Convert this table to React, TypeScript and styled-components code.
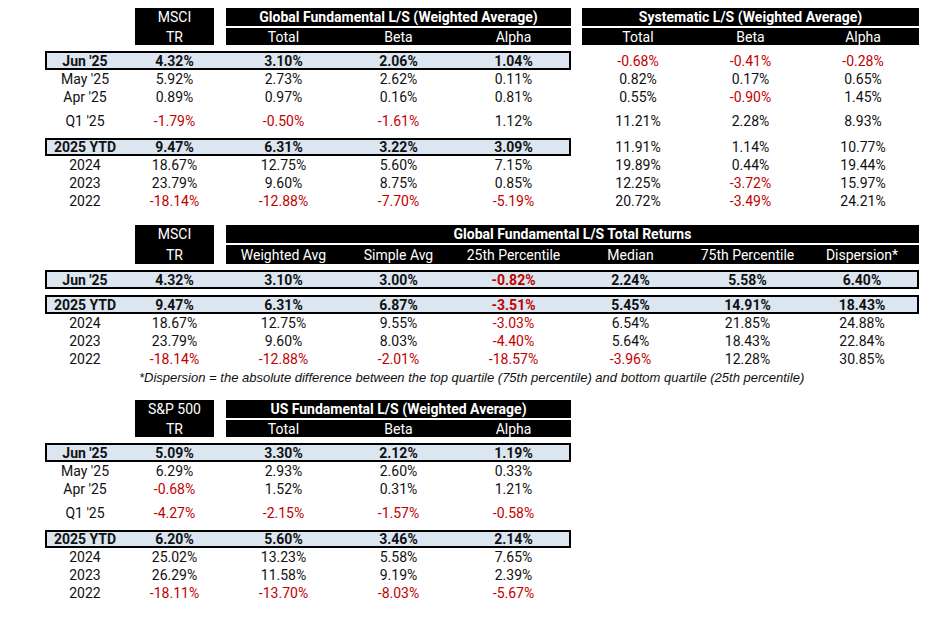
import React from 'react';
import styled, { createGlobalStyle } from 'styled-components';

const GlobalStyle = createGlobalStyle`
  html, body {
    margin: 0;
    padding: 0;
    background: #ffffff;
  }
  body {
    font-family: Roboto, "Liberation Sans", Arial, sans-serif;
    font-size: 14px;
    color: #111111;
  }
`;

const Page = styled.div`
  width: 948px;
  height: 620px;
  box-sizing: border-box;
  padding: 8px 0 0 45px;
  display: flex;
  flex-direction: column;
  overflow: hidden;
`;

const Table = styled.section<{ $mt?: number }>`
  display: flex;
  flex-direction: column;
  margin-top: ${p => p.$mt ?? 0}px;
`;

const HeaderRow = styled.div`
  display: flex;
  align-items: stretch;
`;

const LabelSpacer = styled.div`
  width: 80px;
  flex: none;
`;

const IndexHead = styled.div`
  width: 79px;
  margin-left: 10px;
  flex: none;
  background: #000;
  color: #fff;
  display: flex;
  flex-direction: column;
  gap: 2px;
`;

const HeadLine = styled.div<{ $h: number }>`
  height: ${p => p.$h}px;
  display: flex;
  align-items: center;
  justify-content: center;
`;

const GroupHead = styled.div<{ $w: number; $ml: number }>`
  width: ${p => p.$w}px;
  margin-left: ${p => p.$ml}px;
  flex: none;
  display: flex;
  flex-direction: column;
  gap: 2px;
`;

const TitleBar = styled.div<{ $h: number }>`
  height: ${p => p.$h}px;
  background: #000;
  color: #fff;
  font-weight: 700;
  display: flex;
  align-items: center;
  justify-content: center;
  white-space: nowrap;
`;

const SubBar = styled.div<{ $h: number }>`
  height: ${p => p.$h}px;
  background: #000;
  color: #fff;
  display: flex;
`;

const SubCell = styled.div<{ $w: number }>`
  width: ${p => p.$w}px;
  flex: none;
  display: flex;
  align-items: center;
  justify-content: center;
  white-space: nowrap;
`;

const Row = styled.div<{ $h: number; $mt: number }>`
  display: flex;
  height: ${p => p.$h}px;
  margin-top: ${p => p.$mt}px;
`;

const Boxed = styled.div<{ $hl?: boolean }>`
  display: flex;
  align-items: stretch;
  background: ${p => (p.$hl ? '#dce6f1' : 'transparent')};
  box-shadow: ${p => (p.$hl ? 'inset 0 0 0 2px #000' : 'none')};
`;

const Label = styled.div<{ $bold?: boolean }>`
  width: 80px;
  flex: none;
  display: flex;
  align-items: center;
  justify-content: center;
  font-weight: ${p => (p.$bold ? 700 : 400)};
  white-space: nowrap;
`;

const Value = styled.div<{ $w: number; $ml: number; $bold?: boolean; $neg?: boolean }>`
  width: ${p => p.$w}px;
  margin-left: ${p => p.$ml}px;
  flex: none;
  display: flex;
  align-items: center;
  justify-content: center;
  font-weight: ${p => (p.$bold ? 700 : 400)};
  color: ${p => (p.$neg ? '#c00000' : '#111111')};
`;

const Footnote = styled.div`
  height: 18px;
  display: flex;
  align-items: center;
  padding-left: 94px;
  font-family: "Liberation Sans", Arial, sans-serif;
  font-style: italic;
  font-size: 13px;
  color: #111;
  white-space: nowrap;
`;

type Col = { w: number; ml?: number; head: string };
type Group = { title: string; from: number; to: number };
type RowData = { label: string; values: string[]; hl?: boolean; h?: number; mt?: number };

type TableProps = {
  index: [string, string];
  cols: Col[];
  groups: Group[];
  rows: RowData[];
  boxCount: number;
  topH: number;
  bottomH: number;
  mt?: number;
  children?: React.ReactNode;
};

const DataTable = ({ index, cols, groups, rows, boxCount, topH, bottomH, mt, children }: TableProps) => {
  const cell = (v: string, i: number, bold?: boolean) => (
    <Value key={i} $w={cols[i].w} $ml={cols[i].ml ?? 0} $bold={bold} $neg={v.startsWith('-')}>
      {v}
    </Value>
  );

  return (
    <Table $mt={mt}>
      <HeaderRow>
        <LabelSpacer />
        <IndexHead>
          <HeadLine $h={topH}>{index[0]}</HeadLine>
          <HeadLine $h={bottomH}>{index[1]}</HeadLine>
        </IndexHead>
        {groups.map(g => {
          const part = cols.slice(g.from, g.to);
          const width = part.reduce((s, c) => s + c.w, 0);
          return (
            <GroupHead key={g.title} $w={width} $ml={cols[g.from].ml ?? 0}>
              <TitleBar $h={topH}>{g.title}</TitleBar>
              <SubBar $h={bottomH}>
                {part.map(c => (
                  <SubCell key={c.head} $w={c.w}>{c.head}</SubCell>
                ))}
              </SubBar>
            </GroupHead>
          );
        })}
      </HeaderRow>

      {rows.map(r => (
        <Row key={r.label} $h={r.h ?? 18} $mt={r.mt ?? 0}>
          <Boxed $hl={r.hl}>
            <Label $bold={r.hl}>{r.label}</Label>
            {r.values.slice(0, boxCount).map((v, i) => cell(v, i, r.hl))}
          </Boxed>
          {r.values.slice(boxCount).map((v, i) => cell(v, i + boxCount))}
        </Row>
      ))}
      {children}
    </Table>
  );
};

const globalCols: Col[] = [
  { w: 79, ml: 10, head: 'MSCI' },
  { w: 115, ml: 12, head: 'Total' },
  { w: 115, head: 'Beta' },
  { w: 115, head: 'Alpha' },
  { w: 112, ml: 11, head: 'Total ' },
  { w: 113, head: 'Beta ' },
  { w: 112, head: 'Alpha ' },
];

const globalRows: RowData[] = [
  { label: "Jun '25", hl: true, h: 19, mt: 6, values: ['4.32%', '3.10%', '2.06%', '1.04%', '-0.68%', '-0.41%', '-0.28%'] },
  { label: "May '25", values: ['5.92%', '2.73%', '2.62%', '0.11%', '0.82%', '0.17%', '0.65%'] },
  { label: "Apr '25", values: ['0.89%', '0.97%', '0.16%', '0.81%', '0.55%', '-0.90%', '1.45%'] },
  { label: "Q1 '25", mt: 6, values: ['-1.79%', '-0.50%', '-1.61%', '1.12%', '11.21%', '2.28%', '8.93%'] },
  { label: '2025 YTD', hl: true, mt: 8, values: ['9.47%', '6.31%', '3.22%', '3.09%', '11.91%', '1.14%', '10.77%'] },
  { label: '2024', values: ['18.67%', '12.75%', '5.60%', '7.15%', '19.89%', '0.44%', '19.44%'] },
  { label: '2023', values: ['23.79%', '9.60%', '8.75%', '0.85%', '12.25%', '-3.72%', '15.97%'] },
  { label: '2022', values: ['-18.14%', '-12.88%', '-7.70%', '-5.19%', '20.72%', '-3.49%', '24.21%'] },
];

const spreadCols: Col[] = [
  { w: 79, ml: 10, head: 'MSCI' },
  { w: 115, ml: 12, head: 'Weighted Avg' },
  { w: 115, head: 'Simple Avg' },
  { w: 115, head: '25th Percentile' },
  { w: 119, head: 'Median' },
  { w: 115, head: '75th Percentile' },
  { w: 114, head: 'Dispersion*' },
];

const spreadRows: RowData[] = [
  { label: "Jun '25", hl: true, h: 19, mt: 6, values: ['4.32%', '3.10%', '3.00%', '-0.82%', '2.24%', '5.58%', '6.40%'] },
  { label: '2025 YTD', hl: true, h: 19, mt: 6, values: ['9.47%', '6.31%', '6.87%', '-3.51%', '5.45%', '14.91%', '18.43%'] },
  { label: '2024', values: ['18.67%', '12.75%', '9.55%', '-3.03%', '6.54%', '21.85%', '24.88%'] },
  { label: '2023', values: ['23.79%', '9.60%', '8.03%', '-4.40%', '5.64%', '18.43%', '22.84%'] },
  { label: '2022', values: ['-18.14%', '-12.88%', '-2.01%', '-18.57%', '-3.96%', '12.28%', '30.85%'] },
];

const usCols: Col[] = [
  { w: 79, ml: 10, head: 'S&P 500' },
  { w: 115, ml: 12, head: 'Total' },
  { w: 115, head: 'Beta' },
  { w: 115, head: 'Alpha' },
];

const usRows: RowData[] = [
  { label: "Jun '25", hl: true, h: 19, mt: 6, values: ['5.09%', '3.30%', '2.12%', '1.19%'] },
  { label: "May '25", values: ['6.29%', '2.93%', '2.60%', '0.33%'] },
  { label: "Apr '25", values: ['-0.68%', '1.52%', '0.31%', '1.21%'] },
  { label: "Q1 '25", mt: 6, values: ['-4.27%', '-2.15%', '-1.57%', '-0.58%'] },
  { label: '2025 YTD', hl: true, mt: 8, values: ['6.20%', '5.60%', '3.46%', '2.14%'] },
  { label: '2024', values: ['25.02%', '13.23%', '5.58%', '7.65%'] },
  { label: '2023', values: ['26.29%', '11.58%', '9.19%', '2.39%'] },
  { label: '2022', values: ['-18.11%', '-13.70%', '-8.03%', '-5.67%'] },
];

const App = () => (
  <>
    <GlobalStyle />
    <Page>
      <DataTable
        index={['MSCI', 'TR']}
        cols={globalCols}
        groups={[
          { title: 'Global Fundamental L/S (Weighted Average)', from: 1, to: 4 },
          { title: 'Systematic L/S (Weighted Average)', from: 4, to: 7 },
        ]}
        rows={globalRows}
        boxCount={4}
        topH={18}
        bottomH={17}
      />

      <DataTable
        mt={15}
        index={['MSCI', 'TR']}
        cols={spreadCols}
        groups={[{ title: 'Global Fundamental L/S Total Returns', from: 1, to: 7 }]}
        rows={spreadRows}
        boxCount={7}
        topH={18}
        bottomH={19}
      >
        <Footnote>
          *Dispersion = the absolute difference between the top quartile (75th percentile) and bottom quartile (25th percentile)
        </Footnote>
      </DataTable>

      <DataTable
        mt={14}
        index={['S&P 500', 'TR']}
        cols={usCols}
        groups={[{ title: 'US Fundamental L/S (Weighted Average)', from: 1, to: 4 }]}
        rows={usRows}
        boxCount={4}
        topH={18}
        bottomH={17}
      />
    </Page>
  </>
);

export default App;
